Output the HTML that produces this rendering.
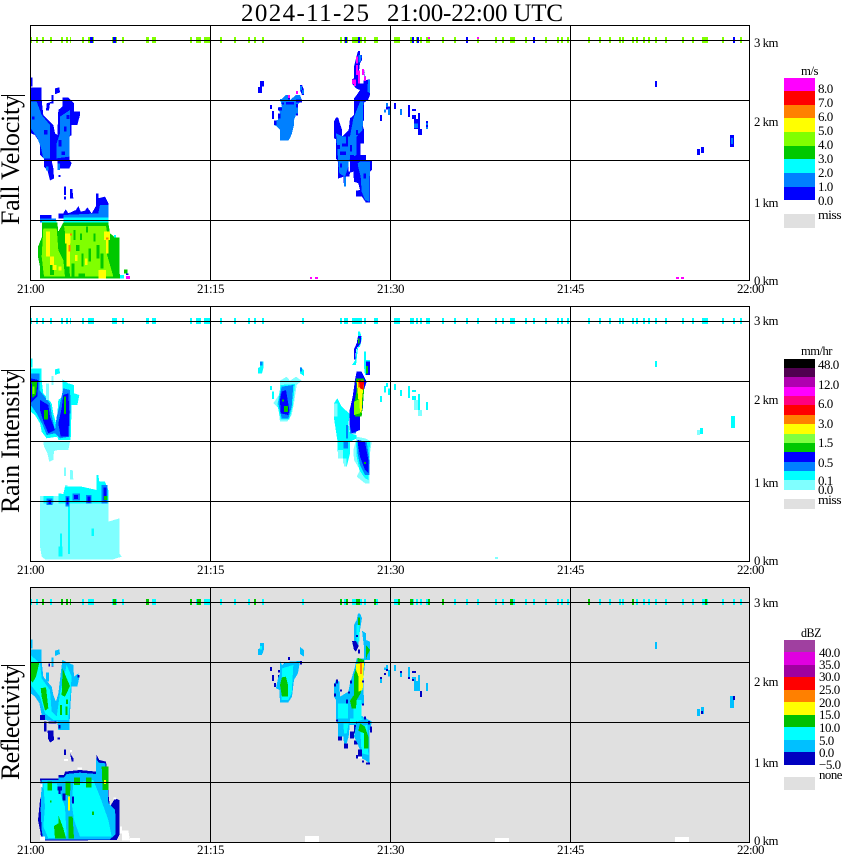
<!DOCTYPE html>
<html><head><meta charset="utf-8"><title>2024-11-25 21:00-22:00 UTC</title>
<style>
html,body{margin:0;padding:0;background:#fff}
svg{display:block}
text{font-family:"Liberation Serif",serif;font-size:13px;letter-spacing:-.5px;fill:#000}
.v{font-size:26px;letter-spacing:0}
.b{fill:#00f}.l{fill:#0080ff}.c{fill:#0ff}.g{fill:#00c800}.i{fill:#80ff00}.y{fill:#ff0}.o{fill:#ff8000}.r{fill:#f00}.m{fill:#f0f}.p{fill:#80ffff}.w{fill:#fff}.d{fill:#0000c0}.s{fill:#00c0ff}.k{fill:#000}
</style></head>
<body>
<svg xmlns="http://www.w3.org/2000/svg" width="850" height="868" viewBox="0 0 850 868" shape-rendering="crispEdges">
<defs>
<path id="t" fill="none" stroke-width="6" d="M30 40h2M36 40h2M42 40h2M50 40h2M61 40h2M66 40h2M70 40h1M82 40h2M88 40h6M112 40h5M122 40h2M146 40h3M152 40h4M190 40h2M196 40h5M204 40h6M220 40h2M234 40h2M248 40h2M254 40h2M262 40h2M302 40h2M340 40h2M344 40h4M352 40h10M364 40h2M374 40h4M394 40h6M410 40h4M416 40h2M420 40h2M426 40h4M442 40h2M454 40h2M466 40h2M477 40h2M495 40h2M502 40h2M510 40h5M525 40h2M533 40h2M545 40h2M557 40h2M561 40h2M567 40h2M588 40h2M599 40h2M609 40h2M619 40h2M622 40h2M632 40h2M636 40h2M643 40h2M648 40h2M655 40h2M665 40h2M682 40h2M692 40h2M702 40h6M722 40h2M733 40h2M740 40h2"/>
</defs>

<text x="241" y="21" style="font-size:25px;letter-spacing:0" textLength="128" lengthAdjust="spacing">2024-11-25</text>
<text x="387" y="21" style="font-size:25px;letter-spacing:0" textLength="176" lengthAdjust="spacing">21:00-22:00 UTC</text>

<!-- PANEL 1 -->
<use href="#t" stroke="#80ff00"/>
<path fill="none" stroke="#00f" stroke-width="6" d="M90 40h3M113 40h3M345 40h2M358 40h2M412 40h2M417 40h2M466 40h2M533 40h2M733 40h2"/>
<path fill="none" stroke="#f0f" stroke-width="2" d="M428 38h2M477 38h2"/>
<g transform="scale(.33333)">
<path class="b" d="M92 232h5v27h-5zM92 262H125V300L130 345 160 375 165 400 172 405 175 330 187 320V293H205L222 310V335H240V345L232 375H215V405L208 410V478L215 490 208 505H175L172 482H155L160 505 162 535 150 542 142 510 132 500V475L120 465V430L105 405 92 400Z"/>
<path class="l" d="M92 305H110L125 345 150 375V475H130L122 440 110 410 92 385ZM180 350L210 330V370L208 470 170 475V430L180 400ZM172 490h8v20h-8zM138 500h8v12h-8z"/>
<path class="b" d="M96 350h8v8h-8zM132 390h10v14h-10zM150 420h12v20h-12zM176 420h8v20h-8zM192 380h8v14h-8zM200 345h8v12h-8zM185 455h10v10h-10z"/>
<path class="b" d="M155 285h5v25h-10l-3 22h-9l2-22 15-5zM165 265l13-3 2 15-15 6zM192 560h6v25h-6zM210 567h7l3 28h-10zM192 590h6v8h-6zM175 525h6v6h-6z"/>
<path class="b" d="M120 645H155V655H168V668H120ZM175 640H190L197 628 205 640 228 630 235 618 242 635 255 632 262 622 275 640 288 618V580H295V595L315 590 325 610V655H175Z"/>
<path class="l" d="M120 655H168V668H120ZM190 645L295 640 300 615H325V668H190Z"/>
<path class="c" d="M126 660H170V668H126ZM190 652H325V668H190ZM175 695h10v25h-10zM175 720h6v10h-6z"/>
<path class="g" d="M126 668H172L175 695 190 668H325L330 700 345 712H358V820L365 835H120V800L114 770V740L126 710Z"/>
<path class="i" d="M130 685H170L175 750 190 780 195 830H132L125 770ZM192 678H318L325 720 320 760 340 830H210L205 760Z"/>
<path class="g" d="M220 690h6v30h-6zM240 700h6v20h-6zM258 680h6v18h-6zM280 700h6v25h-6zM228 735h10v18h-10zM245 760h6v40h-6zM265 745h8v40h-8zM290 735h8v40h-8zM215 790h8v40h-8zM150 785h12v40h-12zM302 760h8v45h-8zM235 820h20v10h-20z"/>
<path class="y" d="M138 695h12v75h-12zM150 770h12v25h-12zM158 795h12v15h-12zM195 700h17v30h-17zM200 730h10v70h-10zM295 810h23v25h-23zM312 695h18v25h-18zM318 720h8v40h-8zM225 765h8v18h-8zM255 775h8v20h-8zM175 800h10v12h-10z"/>
<path class="o" d="M205 735h6v20h-6zM210 700h6v6h-6zM318 712h7v7h-7z"/>
<path class="g" d="M372 808h10v12h-10z"/><path class="b" d="M378 820h7v5h-7z"/><path class="m" d="M378 828h12v9h-12z"/><path class="c" d="M360 825h12v10h-12zM342 705h6v7h-6z"/>
</g>
<g transform="translate(250,30) scale(.33333)">
<path class="b" d="M30 153H42V170H36V189H24V171H30ZM150 165H156L162 180V195H156L150 180ZM60 225h6v12h-6zM66 243h6v24h-6z"/>
<path class="l" d="M150 168h6v12h-6zM156 180h6v12h-6z"/>
<path class="l" d="M90 207H96L108 195H120V210L138 195H150L156 212 144 222V250L138 255 132 270V285L126 310 120 325 114 332H90V300L78 288 72 285V272L84 270V255L90 250 84 232 96 230Z"/>
<path class="b" d="M84 232h12v10h-12zM84 250h8v16h-8zM72 272h8v13h-8zM96 218h6v6h-6zM108 216h24v8h-24zM114 200h6v8h-6zM138 208h18v10h-18zM138 222h6v10h-6zM138 250h6v6h-6z"/>
<path class="m" d="M114 195h6v9h-6zM138 183h6v9h-6z"/>
<path class="b" d="M324 63H330V75H336V90L330 100 326 130V160H340L345 125 336 117H342L348 150 360 148V195L354 210 342 218V270L336 280 342 300V335L332 340V375H348V390L366 392V420L360 425V518H348L336 500H318V482L330 480 325 460 312 455 310 425 300 428 298 440H288V470H282L280 440 264 446V395L258 385V328L252 325V275L258 262H264L276 300V320L296 300 300 265 312 255V205L320 195 330 180 318 175 306 160V148L312 145V110L318 85Z"/>
<path class="l" d="M258 310L280 320H300L310 265 330 215H340L338 300 320 320V375L300 385 295 410 285 440 268 430 264 385ZM330 395H360L358 515 345 510 335 485 332 440 322 400ZM354 150H360V190L352 185ZM325 75H335L332 95 325 98ZM282 440h6v30h-6z"/>
<path class="b" d="M258 345h12v12h-12zM276 340h12v10h-12zM288 320h6v30h-6zM270 365h18v10h-18zM318 300h6v15h-6zM300 345h6v20h-6zM324 310h18v30h-18zM312 400h12v25h-12zM340 430h8v15h-8zM324 375h24v15h-24zM300 375h12v15h-12zM270 400h6v12h-6z"/>
<path class="w" d="M330 125h8v35h-8zM296 395h4v30h-4z"/>
<path class="m" d="M318 80h6v20h-6zM318 105h6v30h-6zM324 122h6v38h-6zM306 148h12v14h-12zM312 155h6v13h-6zM336 117h6v18h-6zM342 140h6v13h-6z"/>
<path class="b" d="M390 255h6v18h-6zM432 219h6v18h-6zM474 225h6v36h-6zM486 237h12v6h-12zM486 255h12v12h-12zM504 249h6v48h-6zM504 297h12v18h-12zM492 267h12v30h-12zM408 230h12v8h-12z"/>
<path class="l" d="M408 219h6v12h-6zM414 236h6v19h-6zM402 238h6v10h-6zM450 237h6v18h-6zM492 280h12v14h-12zM528 273h6v24h-6z"/>
<path class="b" d="M528 273h6v6h-6zM528 285h6v6h-6z"/>
</g>
<path class="b" d="M655 81h2v6h-2zM697 149h3v6h-3zM701 147h3v6h-3zM730 135h4v12h-4z"/>
<path class="l" d="M731 138h2v6h-2z"/>
<path class="m" d="M310 277h2v2h-2zM315 277h3v2h-3zM676 277h3v2h-3zM681 277h3v2h-3z"/>

<!-- PANEL 2 -->
<use href="#t" y="281" stroke="#0ff"/>
<g transform="translate(0,290) scale(.33333)">
<path class="c" d="M92 205h5v27h-5z"/>
<path class="c" d="M92 235H125V270L130 310 155 340 160 370 170 405 175 330 187 320V268L205 280 222 285V310L238 315 232 345H215L212 450H175L172 440 140 445 125 425 120 400 105 375 92 365Z"/>
<path class="l" d="M92 250H118V300L150 340 155 375 165 420 170 380 180 340 190 295 210 300 212 340 208 440 180 445 165 430 140 435 128 405 110 370 92 345Z"/>
<path class="b" d="M92 265L115 270 112 320 92 340ZM120 330L145 345 150 380 165 420 145 430 132 400 120 360ZM190 315L205 310 208 365 205 440H182L175 400 185 355Z"/>
<path class="g" d="M95 275H112L108 315 97 325ZM132 360h12v28h-12zM192 320h6v52h-6z"/>
<path class="i" d="M97 290h7v22h-7z"/>
<path class="p" d="M138 280h9v50h-9zM155 258h5v27h-5zM130 455H210L205 480H175L162 483 160 510 148 515 142 490 132 470ZM192 533h6v25h-6zM210 540h8l2 28h-10zM195 585h8v12h-8z"/>
<path class="c" d="M165 238L178 235 180 250 165 255z"/>
<path class="p" d="M120 640H325V695L358 685V790L365 800 340 808H135L125 800 120 770ZM120 618H175V640H120Z"/>
<path class="c" d="M175 610L190 612 195 590 245 590 290 600V555H295L298 575H315L325 600V640H175ZM130 618h30v22h-30z"/>
<path class="c" d="M204 650h6v142h-6zM175 770h12v30h-12zM180 730h6v40h-6zM275 715h7v23h-7z"/>
<path class="l" d="M140 625h18v20h-18zM197 618h11v32h-11zM218 610h22v22h-22zM258 615h17v25h-17zM305 585h17v55h-17z"/>
<path class="b" d="M145 630h8v12h-8zM200 622h6v22h-6zM222 615h12v12h-12zM262 620h10v18h-10zM310 592h10v40h-10z"/>
<path class="g" d="M312 618h10v12h-10z"/>
</g>
<g transform="translate(250,310) scale(.33333)">
<path class="c" d="M30 155H40V175L36 190H24V175L30 170ZM150 170L162 180V198L150 190ZM60 228h6v12h-6zM66 245h6v22h-6z"/>
<path class="l" d="M30 155h8v12h-8zM150 172h6v12h-6z"/>
<path class="p" d="M90 212L110 200 120 212 138 200 155 212 140 225 132 280 125 315 112 335H90L85 295 70 280 90 250Z"/>
<path class="c" d="M92 225L135 222 128 290 118 328H92L82 285Z"/>
<path class="l" d="M95 230L130 225 125 290 115 325H95L85 280Z"/>
<path class="b" d="M95 245L108 240 118 300 115 315 92 310 90 270Z"/>
<path class="g" d="M102 288h12v18h-12zM96 268h6v6h-6z"/>
<path class="c" d="M252 280L262 265 275 290 300 312 295 340 300 370 320 375V385L300 395V430L290 470H282L280 445H264L262 390 252 325Z"/>
<path class="p" d="M252 280h10v40h-10zM264 420h15v25h-15zM282 445h8v25h-8z"/>
<path class="l" d="M288 345h6v40h-6zM280 395h14v20h-14z"/>
<path class="p" d="M320 380L345 385 365 395 360 430 358 520H345L320 500 330 480 312 450 310 420Z"/>
<path class="c" d="M318 395H360L355 510 345 505 328 480 320 440Z"/>
<path class="l" d="M322 390L350 395 358 450V495H345L330 465 322 425Z"/>
<path class="b" d="M322 390L345 395 355 450V490L345 480 330 440Z"/>
<path class="g" d="M342 456h6v6h-6z"/>
<path class="c" d="M324 65H330L336 85 330 110 320 115 316 150 306 165H318L325 105Z"/>
<path class="b" d="M324 78H334L332 100 318 118 316 148H312V118L320 100Z"/>
<path class="g" d="M324 85h4v15h-4z"/>
<path class="c" d="M342 125H348V150H360V195H345L342 170Z"/>
<path class="b" d="M348 155H360V195H348Z"/>
<path class="g" d="M348 168h6v22h-6z"/>
<path class="l" d="M298 305h20v65h-18l-2-30z"/>
<path class="b" d="M320 185H335L350 215 342 240 338 300 330 320V360L305 370 298 340V305L308 260 315 210Z"/>
<path class="g" d="M318 205H342V245L335 320H315L312 285 320 240Z"/>
<path class="y" d="M320 215L342 215 336 270 335 310 322 300 325 270Z"/>
<path class="i" d="M312 275L328 268 330 310 312 315Z"/>
<path class="o" d="M324 212h18v20h-18z"/>
<path class="r" d="M326 210L342 215 340 240 330 235Z"/>
<path class="c" d="M408 219h6v12h-6zM414 236h6v19h-6zM402 228h6v20h-6zM390 258h6v18h-6zM432 222h6v18h-6zM450 240h6v18h-6zM474 228h6v36h-6zM486 240h12v6h-12zM486 258h12v12h-12zM504 252h6v48h-6zM528 276h6v24h-6z"/>
<path class="p" d="M492 270h12v30h-12zM504 300h12v18h-12z"/>
</g>
<path class="c" d="M655 361h2v6h-2zM700 428h3v6h-3zM731 416h4v12h-4z"/>
<path class="p" d="M697 430h3v5h-3zM495 557h3v2h-3z"/>

<!-- PANEL 3 -->
<rect x="31" y="588" width="718" height="254" fill="#e0e0e0"/>
<g transform="translate(0,580) scale(.33333)">
<path class="s" d="M92 178h5v27h-5zM92 208H125V245L130 290 155 320 160 345 168 365 175 340 187 240 220 255 222 290 235 280 238 292 232 320H215L210 400 208 450H175L172 425 135 420 125 405 118 370 105 350 92 340Z"/>
<path class="c" d="M92 225L120 250 125 295 150 330 155 395 170 410 180 340 200 255 215 290 205 420H160L135 400 120 350 92 315Z"/>
<path class="g" d="M92 248H118L108 290 98 308 92 300ZM122 325L138 322 145 385 135 392 125 350ZM188 265L198 290 210 318 195 350 185 345ZM198 358h6v14h-6zM180 375h6v30h-6zM197 380h6v25h-6z"/>
<path class="d" d="M120 405h15v15h-15zM132 425h8v30h-8zM143 452H160L162 480 150 488 144 475ZM145 425h25v5h-25zM175 435h7v10h-7zM173 472h7v6h-7zM192 508h6v17h-6zM210 520L220 535V545H215ZM145 250h5v10h-5zM155 250h6v10h-6zM138 295h6v10h-6zM232 285h6v8h-6z"/>
<path class="s" d="M165 212L178 208 180 222 165 228ZM155 232h5v26h-5zM138 278h9v27h-9z"/>
<path class="w" d="M192 537h12v6h-12zM210 510h6v6h-6zM232 563h14v5h-14z"/>
<path class="d" d="M120 595H175V585H192L195 575 240 570 290 575V525L298 540 318 545 325 600V640L330 680 345 655 358 660V765L350 780 125 782 120 750 114 720 120 660 126 640Z"/>
<path class="s" d="M125 600H175V592H192L200 582 240 578 288 582V535L296 548 316 550 322 600 325 670 345 690 350 760 330 778H130L125 750 122 690Z"/>
<path class="c" d="M130 610H170L195 680 200 770 145 775 130 740 135 680ZM220 610L280 600 300 650 325 720 335 770H240L222 720 215 670Z"/>
<path class="d" d="M172 620h14v12h-14zM176 630h6v12h-6zM188 640h8v22h-8zM346 690h12v75h-12zM216 650h6v20h-6z"/>
<path class="g" d="M143 605h13v27h-13zM197 605H212L210 648 197 645ZM222 592h18v23h-18zM258 592h17v30h-17zM305 560H325V630H308ZM205 710H218L222 775H205ZM175 705L190 745 198 775H165L162 738 175 730ZM150 662h5v6h-5zM276 695h6v10h-6z"/>
<path class="y" d="M204 650h6v42h-6zM312 600h6v12h-6z"/>
<path class="w" d="M120 770h15v12h-15zM360 740h6v20h-6zM366 752H385L390 782H366ZM402 776h12v6h-12zM122 610h5v12h-5zM340 652h8v6h-8z"/>
</g>
<g transform="translate(250,590) scale(.33333)">
<path class="s" d="M30 159H42V178L36 195H24V178L30 175ZM150 171L162 180V200L150 192Z"/>
<path class="c" d="M30 168h6v10h-6z"/>
<path class="d" d="M114 201h6v9h-6zM60 231h6v12h-6zM66 255h6v18h-6zM72 279h6v12h-6zM84 240h6v8h-6zM84 255h6v8h-6zM150 213h6v10h-6zM102 218h6v6h-6z"/>
<path class="s" d="M90 213L96 225 108 216 150 213 144 250 132 270 126 320 114 338H90L88 300 78 295 84 265 90 250Z"/>
<path class="c" d="M96 235L130 225 125 310 115 330H95Z"/>
<path class="g" d="M96 262L108 260 114 285V320H96L90 285Z"/>
<path class="s" d="M324 70H330L336 85 330 120 325 165H312V105L320 90ZM336 122L348 130V150L360 155V210H342V170Z"/>
<path class="c" d="M320 105h8v50h-8z"/>
<path class="g" d="M324 82h6v23h-6zM348 165L360 180 352 195 348 210Z"/>
<path class="d" d="M306 153H318L326 168 318 185 312 180ZM324 178h6v12h-6zM318 135h6v6h-6z"/>
<path class="s" d="M320 205H342L345 220 340 270 342 340 332 345V375L345 385V405H264L258 385V330L252 320V285L258 270 268 275 270 320 295 305 300 280 315 230Z"/>
<path class="c" d="M264 340h30v45h-30zM310 330h24v55h-24zM300 385h40v15h-40z"/>
<path class="g" d="M322 203L342 210 338 240 332 310 320 330 318 355H305L300 332 312 315V255L322 222Z"/>
<path class="y" d="M318 222L342 218 338 300 325 305V258L318 240Z"/>
<path class="o" d="M330 218h6v34h-6z"/>
<path class="d" d="M258 268h6v12h-6zM252 280h6v10h-6zM252 310h6v10h-6zM270 298h6v6h-6zM288 328h6v12h-6zM300 272h6v8h-6zM294 304h6v6h-6zM336 272h6v6h-6zM336 340h6v6h-6zM258 388h6v6h-6zM318 394h6v8h-6z"/>
<path class="s" d="M264 395H300L296 440 290 460H282L280 440H264Z"/>
<path class="c" d="M280 400H296L290 430H282Z"/>
<path class="d" d="M264 440h12v12h-12zM282 460h12v16h-12zM300 425h12v20h-12zM312 405h6v25h-6zM312 452h10v12h-10z"/>
<path class="s" d="M320 395L348 385 366 395 358 425V520L345 510 325 500 330 480 320 455 312 440Z"/>
<path class="c" d="M330 410L352 405 355 495 335 490Z"/>
<path class="g" d="M330 400L345 410 355 440V475H342V430L325 422Z"/>
<path class="d" d="M342 380h6v8h-6zM354 393h6v10h-6zM360 410h6v18h-6zM324 478h12v22h-12zM318 495h7v11h-7zM348 518h12v6h-12zM336 512h6v6h-6z"/>
<path class="w" d="M324 500h12v6h-12z"/>
<path class="s" d="M408 225h6v12h-6zM414 240h6v20h-6zM402 232h6v8h-6zM390 267h6v12h-6zM432 225h6v18h-6zM450 249h6v12h-6zM474 231h6v30h-6zM486 261h12v12h-12zM504 255h6v48h-6zM492 273h12v30h-12zM528 279h6v24h-6z"/>
<path class="d" d="M390 261h6v6h-6zM408 237h6v6h-6zM402 249h6v6h-6zM450 243h6v6h-6zM474 261h6v6h-6zM486 243h12v6h-12zM486 267h6v6h-6zM510 303h6v18h-6z"/>
</g>
<path class="s" d="M655 642h2v7h-2zM697 709h3v7h-3zM701 707h3v7h-3zM730 696h4v12h-4z"/>
<path class="d" d="M733 696h2v4h-2zM701 711h2v3h-2z"/>
<path class="w" d="M130 838h10v4h-10zM305 836h14v6h-14zM495 838h14v4h-14zM675 837h14v5h-14z"/>
<use href="#t" y="562" stroke="#0ff"/>
<path fill="none" stroke="#00c800" stroke-width="6" d="M42 602h2M61 602h2M66 602h2M70 602h1M113 602h3M146 602h3M190 602h2M197 602h4M254 602h2M340 602h2M346 602h2M356 602h4M374 602h2M398 602h2M410 602h3M428 602h2M442 602h2M510 602h3M588 602h2M632 602h2M705 602h2"/>

<!-- GRIDS -->
<g class="k">
<path d="M30 25h720v1H30zM30 280h720v1H30zM30 25h1v256h-1zM749 25h1v256h-1zM210 25h1v256h-1zM390 25h1v256h-1zM570 25h1v256h-1zM30 40h720v1H30zM30 100h720v1H30zM30 160h720v1H30zM30 220h720v1H30z"/>
<path d="M30 306h720v1H30zM30 561h720v1H30zM30 306h1v256h-1zM749 306h1v256h-1zM210 306h1v256h-1zM390 306h1v256h-1zM570 306h1v256h-1zM30 321h720v1H30zM30 381h720v1H30zM30 441h720v1H30zM30 501h720v1H30z"/>
<path d="M30 587h720v1H30zM30 842h720v1H30zM30 587h1v256h-1zM749 587h1v256h-1zM210 587h1v256h-1zM390 587h1v256h-1zM570 587h1v256h-1zM30 602h720v1H30zM30 662h720v1H30zM30 722h720v1H30zM30 782h720v1H30z"/>
</g>

<!-- AXIS LABELS -->
<text x="17" y="293" textLength="27" lengthAdjust="spacingAndGlyphs">21:00</text>
<text x="197" y="293" textLength="27" lengthAdjust="spacingAndGlyphs">21:15</text>
<text x="377" y="293" textLength="27" lengthAdjust="spacingAndGlyphs">21:30</text>
<text x="557" y="293" textLength="27" lengthAdjust="spacingAndGlyphs">21:45</text>
<text x="737" y="293" textLength="27" lengthAdjust="spacingAndGlyphs">22:00</text>
<text x="17" y="574" textLength="27" lengthAdjust="spacingAndGlyphs">21:00</text>
<text x="197" y="574" textLength="27" lengthAdjust="spacingAndGlyphs">21:15</text>
<text x="377" y="574" textLength="27" lengthAdjust="spacingAndGlyphs">21:30</text>
<text x="557" y="574" textLength="27" lengthAdjust="spacingAndGlyphs">21:45</text>
<text x="737" y="574" textLength="27" lengthAdjust="spacingAndGlyphs">22:00</text>
<text x="17" y="854" textLength="27" lengthAdjust="spacingAndGlyphs">21:00</text>
<text x="197" y="854" textLength="27" lengthAdjust="spacingAndGlyphs">21:15</text>
<text x="377" y="854" textLength="27" lengthAdjust="spacingAndGlyphs">21:30</text>
<text x="557" y="854" textLength="27" lengthAdjust="spacingAndGlyphs">21:45</text>
<text x="737" y="854" textLength="27" lengthAdjust="spacingAndGlyphs">22:00</text>
<text x="754" y="47" textLength="24" lengthAdjust="spacingAndGlyphs">3 km</text>
<text x="754" y="126" textLength="24" lengthAdjust="spacingAndGlyphs">2 km</text>
<text x="754" y="207" textLength="24" lengthAdjust="spacingAndGlyphs">1 km</text>
<text x="754" y="285" textLength="24" lengthAdjust="spacingAndGlyphs">0 km</text>
<text x="754" y="325" textLength="24" lengthAdjust="spacingAndGlyphs">3 km</text>
<text x="754" y="404" textLength="24" lengthAdjust="spacingAndGlyphs">2 km</text>
<text x="754" y="487" textLength="24" lengthAdjust="spacingAndGlyphs">1 km</text>
<text x="754" y="565" textLength="24" lengthAdjust="spacingAndGlyphs">0 km</text>
<text x="754" y="607" textLength="24" lengthAdjust="spacingAndGlyphs">3 km</text>
<text x="754" y="686" textLength="24" lengthAdjust="spacingAndGlyphs">2 km</text>
<text x="754" y="767" textLength="24" lengthAdjust="spacingAndGlyphs">1 km</text>
<text x="754" y="845" textLength="24" lengthAdjust="spacingAndGlyphs">0 km</text>

<!-- SIDE TITLES -->
<text class="v" transform="translate(19,225) rotate(-90)" textLength="130" lengthAdjust="spacing">Fall Velocity</text>
<text class="v" transform="translate(19,513) rotate(-90)" textLength="143" lengthAdjust="spacing">Rain Intensity</text>
<text class="v" transform="translate(19,780) rotate(-90)" textLength="115" lengthAdjust="spacing">Reflectivity</text>
<rect x="1" y="95" width="24" height="1"/>
<rect x="1" y="370" width="24" height="1"/>
<rect x="1" y="665" width="24" height="1"/>

<!-- LEGEND 1 -->
<rect x="784" y="78" width="31" height="13" fill="#f0f"/>
<rect x="784" y="91" width="31" height="14" fill="#f00"/>
<rect x="784" y="105" width="31" height="13" fill="#ff8000"/>
<rect x="784" y="118" width="31" height="14" fill="#ff0"/>
<rect x="784" y="132" width="31" height="14" fill="#80ff00"/>
<rect x="784" y="146" width="31" height="13" fill="#00c800"/>
<rect x="784" y="159" width="31" height="14" fill="#0ff"/>
<rect x="784" y="173" width="31" height="14" fill="#0080ff"/>
<rect x="784" y="187" width="31" height="13" fill="#00f"/>
<rect x="784" y="214" width="31" height="14" fill="#e0e0e0"/>
<text x="801" y="75" textLength="17" lengthAdjust="spacingAndGlyphs">m/s</text>
<text x="818" y="93">8.0</text><text x="818" y="107">7.0</text><text x="818" y="121">6.0</text><text x="818" y="135">5.0</text><text x="818" y="149">4.0</text><text x="818" y="163">3.0</text><text x="818" y="177">2.0</text><text x="818" y="191">1.0</text><text x="818" y="205">0.0</text>
<text x="818" y="219" textLength="23" lengthAdjust="spacingAndGlyphs">miss</text>

<!-- LEGEND 2 -->
<rect x="784" y="359" width="31" height="9" fill="#000"/>
<rect x="784" y="368" width="31" height="9" fill="#500050"/>
<rect x="784" y="377" width="31" height="10" fill="#b000b0"/>
<rect x="784" y="387" width="31" height="9" fill="#f0f"/>
<rect x="784" y="396" width="31" height="9" fill="#ff0080"/>
<rect x="784" y="405" width="31" height="10" fill="#f00"/>
<rect x="784" y="415" width="31" height="9" fill="#ff8000"/>
<rect x="784" y="424" width="31" height="10" fill="#ff0"/>
<rect x="784" y="434" width="31" height="9" fill="#80ff40"/>
<rect x="784" y="443" width="31" height="9" fill="#00c800"/>
<rect x="784" y="452" width="31" height="10" fill="#00f"/>
<rect x="784" y="462" width="31" height="9" fill="#0080ff"/>
<rect x="784" y="471" width="31" height="9" fill="#0ff"/>
<rect x="784" y="480" width="31" height="10" fill="#80ffff"/>
<rect x="784" y="499" width="31" height="10" fill="#e0e0e0"/>
<text x="801" y="355" textLength="31" lengthAdjust="spacingAndGlyphs">mm/hr</text>
<text x="818" y="369">48.0</text><text x="818" y="389">12.0</text><text x="818" y="408">6.0</text><text x="818" y="428">3.0</text><text x="818" y="447">1.5</text><text x="818" y="467">0.5</text><text x="818" y="485">0.1</text><text x="818" y="494">0.0</text>
<text x="818" y="504" textLength="23" lengthAdjust="spacingAndGlyphs">miss</text>

<!-- LEGEND 3 -->
<rect x="784" y="640" width="31" height="12" fill="#a040a0"/>
<rect x="784" y="652" width="31" height="13" fill="#e000e0"/>
<rect x="784" y="665" width="31" height="12" fill="#a000a0"/>
<rect x="784" y="677" width="31" height="13" fill="#f00"/>
<rect x="784" y="690" width="31" height="12" fill="#ff8000"/>
<rect x="784" y="702" width="31" height="13" fill="#ff0"/>
<rect x="784" y="715" width="31" height="12" fill="#00c000"/>
<rect x="784" y="727" width="31" height="13" fill="#0ff"/>
<rect x="784" y="740" width="31" height="12" fill="#00c0ff"/>
<rect x="784" y="752" width="31" height="13" fill="#0000c0"/>
<rect x="784" y="777" width="31" height="13" fill="#e0e0e0"/>
<text x="801" y="637" textLength="20" lengthAdjust="spacingAndGlyphs">dBZ</text>
<text x="819" y="657">40.0</text><text x="819" y="669">35.0</text><text x="819" y="681">30.0</text><text x="819" y="694">25.0</text><text x="819" y="707">20.0</text><text x="819" y="719">15.0</text><text x="819" y="732">10.0</text><text x="819" y="745">5.0</text><text x="819" y="757">0.0</text><text x="819" y="769">−5.0</text>
<text x="819" y="779" textLength="23" lengthAdjust="spacingAndGlyphs">none</text>
</svg>
</body></html>
